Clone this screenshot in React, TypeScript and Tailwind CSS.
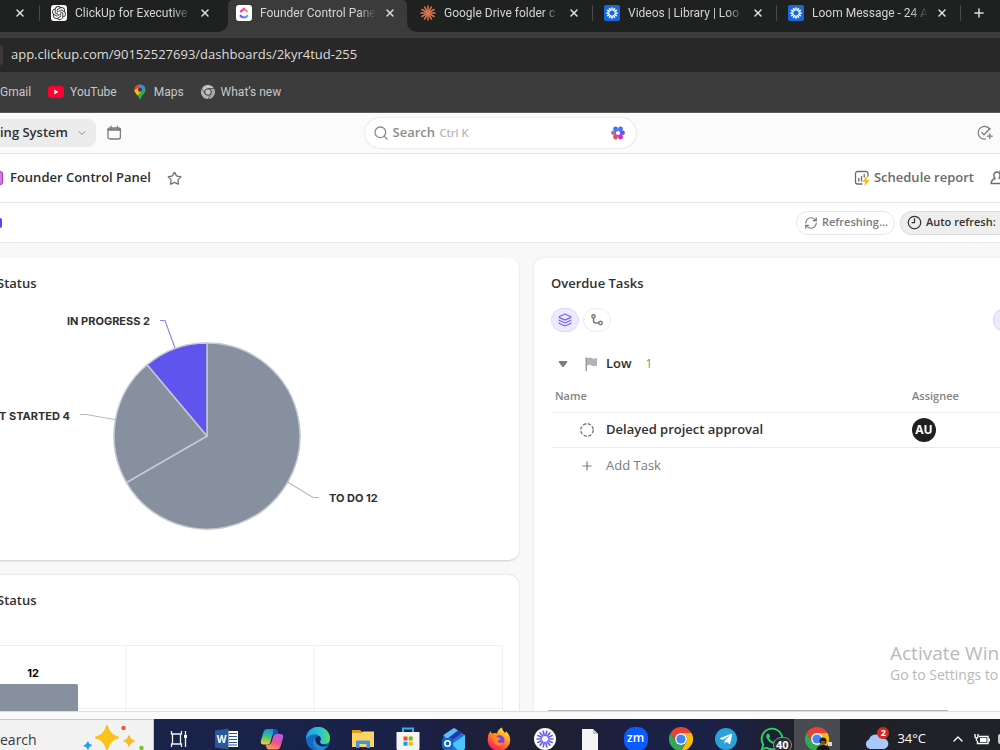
import React from 'react'
import {
  ChevronDown,
  ChevronUp,
  Clock9,
  Layers,
  Plus,
  RefreshCw,
  Search,
  Star,
  X,
} from 'lucide-react'
import { FaWhatsapp, FaTelegramPlane } from 'react-icons/fa'
import { SiOpenai } from 'react-icons/si'

interface IconProps {
  className?: string
}

interface BurstProps extends IconProps {
  rays: number
  inner: number
  outer: number
  width: number
}

function Burst({ rays, inner, outer, width, className }: BurstProps) {
  const angles = Array.from({ length: rays }, (_, i) => (i * 2 * Math.PI) / rays)
  return (
    <svg viewBox="-12 -12 24 24" className={className} fill="none" stroke="currentColor" strokeWidth={width} strokeLinecap="round">
      {angles.map((a) => (
        <path
          key={a}
          d={`M${Math.cos(a) * inner} ${Math.sin(a) * inner}L${Math.cos(a) * outer} ${Math.sin(a) * outer}`}
        />
      ))}
    </svg>
  )
}

function OpenAiFavicon() {
  return (
    <span className="flex h-4 w-4 shrink-0 items-center justify-center rounded-[3px] bg-white">
      <SiOpenai className="h-3.5 w-3.5 text-[#333333]" />
    </span>
  )
}

function ClickUpFavicon() {
  return (
    <svg viewBox="0 0 16 16" className="h-4 w-4 shrink-0">
      <defs>
        <linearGradient id="cuTop" x1="0" x2="1">
          <stop offset="0" stopColor="#ff02f0" />
          <stop offset="1" stopColor="#ffb11a" />
        </linearGradient>
        <linearGradient id="cuBottom" x1="0" x2="1">
          <stop offset="0" stopColor="#8930fd" />
          <stop offset="1" stopColor="#27c8f9" />
        </linearGradient>
      </defs>
      <rect width="16" height="16" rx="3" fill="#fff" />
      <path d="M4.4 7L8 3.7L11.6 7" fill="none" stroke="url(#cuTop)" strokeWidth="2" />
      <path d="M4 10.2Q8 14.8 12 10.2" fill="none" stroke="url(#cuBottom)" strokeWidth="2.1" />
    </svg>
  )
}

function ClaudeFavicon() {
  return <Burst rays={12} inner={1} outer={10.5} width={2.2} className="h-4 w-4 shrink-0 text-[#e0734f]" />
}

function LoomFavicon() {
  return (
    <span className="flex h-4 w-4 shrink-0 items-center justify-center rounded-[2px] bg-[#1868db]">
      <Burst rays={12} inner={5.5} outer={8.5} width={3} className="h-3.5 w-3.5 text-[#e4efff]" />
    </span>
  )
}

function YouTubeIcon() {
  return (
    <svg viewBox="0 0 16 12" className="h-3 w-4">
      <rect width="16" height="12" rx="3" fill="#ff0033" />
      <path d="M6.3 3.6L10.5 6L6.3 8.4Z" fill="#fff" />
    </svg>
  )
}

function MapsIcon() {
  return (
    <svg viewBox="0 0 12 16" className="h-4 w-3">
      <defs>
        <clipPath id="pin">
          <path d="M6 0.5A5.5 5.5 0 0 1 11.5 6C11.5 9.6 7.5 10.8 6.7 14.8Q6 16 5.3 14.8C4.5 10.8 0.5 9.6 0.5 6A5.5 5.5 0 0 1 6 0.5Z" />
        </clipPath>
      </defs>
      <g clipPath="url(#pin)">
        <rect width="12" height="16" fill="#34a853" />
        <path d="M0 0H6V6L0 9Z" fill="#ea4335" />
        <path d="M5 0H12V3L7 8Z" fill="#4285f4" />
        <path d="M0 6.5L4 4L7 8L2 13L0 11Z" fill="#fbbc04" />
      </g>
      <circle cx="6" cy="5.8" r="2" fill="#3c3c3c" />
    </svg>
  )
}

interface ChromeIconProps extends IconProps {
  mono?: boolean
}

function ChromeIcon({ mono, className }: ChromeIconProps) {
  const [red, yellow, green, blue, ring] = mono
    ? ['#c3c3c3', '#a9a9a9', '#b6b6b6', '#c3c3c3', '#3c3c3c']
    : ['#e94235', '#fbbc05', '#31a853', '#4285f4', '#ffffff']
  return (
    <svg viewBox="0 0 24 24" className={className}>
      <path d="M1.6 6A12 12 0 0 1 22.4 6H12A6 6 0 0 0 6.8 15Z" fill={red} />
      <path d="M22.4 6A12 12 0 0 1 12 24L17.2 15A6 6 0 0 0 12 6Z" fill={yellow} />
      <path d="M12 24A12 12 0 0 1 1.6 6L6.8 15A6 6 0 0 0 17.2 15Z" fill={green} />
      {mono && <path d="M12 6H22.4M6.8 15L1.6 6M17.2 15L12 24" stroke={ring} strokeWidth="1" />}
      <circle cx="12" cy="12" r="6" fill={ring} />
      <circle cx="12" cy="12" r="4.6" fill={blue} />
    </svg>
  )
}

function CalendarIcon() {
  return (
    <svg viewBox="0 0 16 16" className="h-4 w-4" fill="none" stroke="#7c7c7c" strokeLinecap="round">
      <rect x="2" y="3" width="12.4" height="11" rx="2" strokeWidth="1.3" />
      <path d="M2.5 4.6H14" strokeWidth="2.4" />
      <path d="M5 1.2V3M11.4 1.2V3" strokeWidth="1.3" />
    </svg>
  )
}

function BrainIcon() {
  return (
    <svg viewBox="-8 -8 16 16" className="h-4 w-4">
      <defs>
        <linearGradient id="brainTop" x1="0" x2="1">
          <stop offset="0" stopColor="#1e9bff" />
          <stop offset="1" stopColor="#3d5cff" />
        </linearGradient>
      </defs>
      <circle cx="-4.6" cy="-0.2" r="2.3" fill="#a86cc0" />
      <circle cx="4.6" cy="-0.2" r="2.3" fill="#7a42ff" />
      <circle cx="-2.5" cy="-4" r="2.4" fill="url(#brainTop)" />
      <circle cx="2.5" cy="-4" r="2.4" fill="#3578ff" />
      <circle cx="2.5" cy="4" r="2.4" fill="#f311d8" />
      <circle cx="-2.5" cy="4" r="2.4" fill="#f4502c" />
      <circle r="2.8" fill="none" stroke="#7a62e8" strokeWidth="1.4" />
    </svg>
  )
}

function TaskAddIcon() {
  return (
    <svg viewBox="0 0 16 16" className="h-4 w-4" fill="none" stroke="#7c7c7c" strokeWidth="1.3" strokeLinecap="round">
      <path d="M12.8 4.2A6.3 6.3 0 1 0 8.2 14" />
      <path d="M4.8 7.5L7 9.7L13 3.5" />
      <path d="M12.8 8.8V13.6M10.4 11.2H15.2" />
    </svg>
  )
}

function ReportIcon() {
  return (
    <svg viewBox="0 0 16 16" className="h-4 w-4" fill="none" strokeLinecap="round">
      <path d="M14 6V3.5A2 2 0 0 0 12 1.5H3.5A2 2 0 0 0 1.5 3.5V12A2 2 0 0 0 3.5 14H8" stroke="#6c6c6c" strokeWidth="1.3" />
      <path d="M4.8 8.5V11M7.5 6.5V11M10.2 4.5V7" stroke="#6c6c6c" strokeWidth="1.3" />
      <path d="M12.8 6.5L9 11.5H11.8L11 15.5L15 10.5H12.2Z" fill="#ffb400" stroke="#ffb400" strokeWidth="0.6" />
    </svg>
  )
}

function PersonIcon() {
  return (
    <svg viewBox="0 0 16 16" className="h-4 w-4" fill="none" stroke="#6c6c6c" strokeWidth="1.4" strokeLinecap="round">
      <path d="M5 8.5Q3.6 6.8 3.9 4.5Q4.5 2 7 2Q9.5 2 10 4.5Q10.3 6.8 9 8.5" />
      <path d="M5 8.5Q1.2 9.8 1.2 13.5H12" />
      <path d="M10 1.5A3 3 0 0 1 13 6" />
    </svg>
  )
}

function SubtaskIcon() {
  return (
    <svg viewBox="0 0 12 12" className="h-3 w-3" fill="none" stroke="#7a7a7a" strokeWidth="1.5">
      <circle cx="2.5" cy="2.3" r="1.6" />
      <circle cx="9.5" cy="9" r="1.7" />
      <path d="M2.5 4V6.5A2.5 2.5 0 0 0 5 9H7.7" />
    </svg>
  )
}

interface Tab {
  title: string
  icon: React.ReactNode
  divider?: boolean
}

const rightTabs: Tab[] = [
  { title: 'Google Drive folder c', icon: <ClaudeFavicon />, divider: true },
  { title: 'Videos | Library | Loo', icon: <LoomFavicon />, divider: true },
  { title: 'Loom Message - 24 A', icon: <LoomFavicon />, divider: true },
]

function TabContent({ title, icon, divider }: Tab) {
  return (
    <>
      {icon}
      <a
        href="#"
        className="w-[116px] overflow-hidden whitespace-nowrap text-[#d4d4d4] [mask-image:linear-gradient(to_right,#000_85%,transparent)]"
      >
        {title}
      </a>
      <button aria-label="Close tab" className="text-[#dedede]">
        <X className="h-3 w-3" strokeWidth={3} />
      </button>
      {divider && <span className="ml-auto h-4 w-px bg-[#4a4b4a]" />}
    </>
  )
}

function TabStrip() {
  return (
    <div className="flex h-8 overflow-hidden bg-[#3b3b3b] text-xs">
      <div className="flex w-[228px] shrink-0 rounded-br-[10px] bg-[#1f2120]">
        <div className="flex h-[25px] w-[43px] items-center pl-[14px]">
          <button aria-label="Close tab" className="text-[#dedede]">
            <X className="h-3 w-3" strokeWidth={3} />
          </button>
          <span className="ml-auto mr-[3px] h-4 w-px bg-[#4a4b4a]" />
        </div>
        <div className="flex h-[25px] flex-1 items-center gap-2 pl-2">
          <TabContent title="ClickUp for Executive" icon={<OpenAiFavicon />} />
        </div>
      </div>
      <div className="w-[179px] shrink-0 bg-[#1f2120]">
        <div className="h-full rounded-t-[5px] bg-[#3b3b3b]">
          <div className="flex h-[25px] items-center gap-2 pl-2">
            <TabContent title="Founder Control Pane" icon={<ClickUpFavicon />} />
          </div>
        </div>
      </div>
      <div className="flex min-w-0 flex-1 rounded-bl-[10px] bg-[#1f2120] pl-[5px]">
        {rightTabs.map((tab) => (
          <div key={tab.title} className="flex h-[25px] w-[184px] shrink-0 items-center gap-2 pl-2 pr-[3px]">
            <TabContent {...tab} />
          </div>
        ))}
        <button aria-label="New tab" className="ml-2 h-[25px] text-[#dedede]">
          <Plus className="h-3.5 w-3.5" strokeWidth={2.5} />
        </button>
      </div>
    </div>
  )
}

function BrowserChrome() {
  return (
    <header className="font-[Roboto,sans-serif]">
      <TabStrip />
      <div className="bg-[#3b3b3b] pt-1.5">
        <div className="flex h-[34px] items-center overflow-hidden bg-[#282828]">
          <span className="h-5 w-[3px] rounded-r-full bg-[#3c3c3c]" />
          <input
            aria-label="Address"
            defaultValue="app.clickup.com/90152527693/dashboards/2kyr4tud-255"
            className="ml-2 w-full bg-transparent font-['Open_Sans',sans-serif] text-[13px] text-[#dcdcdc] outline-none"
          />
        </div>
      </div>
      <nav className="flex h-[41px] items-center gap-[17px] border-b border-[#5a5a5a] bg-[#3c3c3c] text-xs text-[#c8c8c8]">
        <a href="#">Gmail</a>
        <a href="#" className="flex items-center gap-1.5">
          <YouTubeIcon />
          YouTube
        </a>
        <a href="#" className="flex items-center gap-2">
          <MapsIcon />
          Maps
        </a>
        <a href="#" className="flex items-center gap-1.5">
          <ChromeIcon mono className="h-3.5 w-3.5" />
          What’s new
        </a>
      </nav>
    </header>
  )
}

function AppBar() {
  return (
    <div className="grid h-[41px] grid-cols-[1fr_271px_1fr] items-center border-b border-[#e6e6e6] bg-[#fbfbfb]">
      <div className="flex items-center">
        <button className="flex h-7 w-24 items-center justify-between whitespace-nowrap rounded-r-lg bg-[#ececec] pr-2 text-[13px] font-semibold text-[#303030]">
          ing System
          <ChevronDown className="h-3 w-3 text-[#8a8a8a]" />
        </button>
        <button aria-label="Calendar" className="ml-2.5">
          <CalendarIcon />
        </button>
      </div>
      <label className="flex h-[30px] items-center rounded-full bg-white pl-2 pr-2.5 shadow-[0_0_2px_rgba(0,0,0,0.2)]">
        <Search className="h-4 w-4 text-[#8c8c8c]" strokeWidth={2} />
        <input
          aria-label="Search"
          placeholder="Search"
          className="ml-1 w-[47px] bg-transparent text-[13px] font-semibold outline-none placeholder:text-[#8c8c8c]"
        />
        <kbd className="font-[Open_Sans,sans-serif] text-[11px] font-semibold text-[#b8b8b8]">Ctrl K</kbd>
        <span className="ml-auto">
          <BrainIcon />
        </span>
      </label>
      <button aria-label="New task" className="mr-[7px] justify-self-end">
        <TaskAddIcon />
      </button>
    </div>
  )
}

function TitleBar() {
  return (
    <div className="flex h-[49px] items-center overflow-hidden border-b border-[#e8e8e8] bg-white">
      <span className="h-3.5 w-[3px] rounded-r-[3px] border border-l-0 border-[#a83bc0] bg-[#cf7fdd]" />
      <h1 className="ml-[7px] text-[13px] font-semibold text-[#2e2e2e]">Founder Control Panel</h1>
      <button aria-label="Favorite" className="ml-4 text-[#707070]">
        <Star className="h-[15px] w-[15px]" strokeWidth={2} />
      </button>
      <button className="ml-auto flex items-center gap-1 text-[13px] font-semibold text-[#6a6a6a]">
        <ReportIcon />
        Schedule report
      </button>
      <button aria-label="Share" className="-mr-1.5 ml-4 shrink-0">
        <PersonIcon />
      </button>
    </div>
  )
}

function RefreshBar() {
  return (
    <div className="flex h-10 items-center overflow-hidden border-b border-[#e8e8e8] bg-white text-[11px] font-semibold">
      <span className="h-2.5 w-[2px] rounded-r-full bg-[#5b43f0]" />
      <button className="ml-auto flex h-6 w-[99px] items-center gap-1 whitespace-nowrap rounded-full border border-[#e8e8e8] pl-[7px] text-[#7a7a7a]">
        <RefreshCw className="h-3.5 w-3.5 shrink-0" />
        Refreshing...
      </button>
      <button className="ml-[5px] flex h-6 w-[100px] items-center gap-1 whitespace-nowrap rounded-l-full border border-r-0 border-[#dcdcdc] bg-[#eeeeee] pl-1.5 text-[#333333]">
        <Clock9 className="h-[15px] w-[15px] shrink-0" />
        Auto refresh:
      </button>
    </div>
  )
}

const pieLabel = 'fill-[#303030] font-[Inter,sans-serif] text-[11px] font-bold'

function StatusPie() {
  return (
    <svg viewBox="0 300 400 240" className="mt-2 h-[240px] w-[400px]">
      <g stroke="#c3c9d0" strokeWidth="1.5" strokeLinejoin="round">
        <path d="M207 436V343A93 93 0 1 1 126.5 482.5Z" fill="#87909e" />
        <path d="M207 436L126.5 482.5A93 93 0 0 1 147.2 364.8Z" fill="#87909e" />
        <path d="M207 436L147.2 364.8A93 93 0 0 1 207 343Z" fill="#5f55ee" />
      </g>
      <g fill="none">
        <path d="M160 320.5H165L175 348" stroke="#8f88f3" strokeWidth="1.2" />
        <path d="M80 414.5H86L115 419.5" stroke="#b4b9c1" strokeWidth="1.2" />
        <path d="M287.5 482L313 497.5H319" stroke="#b4b9c1" strokeWidth="1.2" />
      </g>
      <text x="150" y="325" textAnchor="end" className={pieLabel}>IN PROGRESS 2</text>
      <text x="70" y="420" textAnchor="end" className={pieLabel}>T STARTED 4</text>
      <text x="329" y="502" className={pieLabel}>TO DO 12</text>
    </svg>
  )
}

function StatusBars() {
  return (
    <svg viewBox="0 620 519 100" className="mt-[11px] h-[100px] w-[519px]">
      <path d="M0 645.5H502.5V720M126 645.5V720M314 645.5V720M0 708.5H502" fill="none" stroke="#f0f0f0" />
      <path d="M0 684H76Q78 684 78 686V720H0Z" fill="#87909e" />
      <text x="33" y="677" textAnchor="middle" className="fill-black font-[Inter,sans-serif] text-[11px] font-bold">12</text>
    </svg>
  )
}

function OverdueTasks() {
  return (
    <section className="flex min-w-0 flex-col overflow-hidden rounded-tl-[10px] bg-white pl-[17px] shadow-[0_0_3px_rgba(0,0,0,0.1)]">
      <h2 className="mt-4 h-[18px] text-[13px] font-semibold leading-[18px] text-[#303030]">Overdue Tasks</h2>
      <div className="mt-4 flex shrink-0 gap-1">
        <button aria-label="Group by" className="flex h-6 w-7 items-center justify-center rounded-full border border-[#dcd9fb] bg-[#ecebfe] text-[#6f63ef]">
          <Layers className="h-3.5 w-3.5" />
        </button>
        <button aria-label="Subtasks" className="flex h-6 w-7 items-center justify-center rounded-full border border-[#ebebeb]">
          <SubtaskIcon />
        </button>
        <button aria-label="Filter" className="-mr-[21px] ml-auto h-6 w-7 shrink-0 rounded-full border border-[#d2cefa] bg-[#ecebfe]" />
      </div>
      <div className="mt-5 flex h-6 shrink-0 items-center pl-[7px] text-[13px]">
        <button aria-label="Collapse group">
          <svg viewBox="0 0 10 8" className="h-2 w-2.5" fill="#7d7d7d">
            <path d="M1.5 1H8.5Q10 1.2 9 2.6L6 6.5Q5 7.5 4 6.5L1 2.6Q0 1.2 1.5 1Z" />
          </svg>
        </button>
        <svg viewBox="0 0 12 14" className="ml-[17px] h-3.5 w-3">
          <path d="M0.5 0.5H2V14H0.5Z" fill="#9b9b9b" />
          <path d="M2 1Q4.5 -0.2 6.5 1T12 1V8.5Q9 9.8 6.5 8.5T2 8.5Z" fill="#b3b3b3" />
        </svg>
        <span className="ml-[9px] font-semibold text-[#303030]">Low</span>
        <span className="ml-3.5 text-xs text-[#8a8a8a]">1</span>
      </div>
      <table className="w-full table-fixed border-collapse text-left text-[13px]">
        <thead>
          <tr className="h-9 border-b border-[#ececec] text-[11px] text-[#838383]">
            <th className="w-[361px] pl-1 pt-1 font-semibold">Name</th>
            <th className="pt-1 font-semibold">Assignee</th>
          </tr>
        </thead>
        <tbody>
          <tr className="h-[35px] border-b border-[#ececec]">
            <td>
              <div className="flex items-center pl-7">
                <svg viewBox="0 0 16 16" className="h-4 w-4" fill="none" stroke="#7d7d7d" strokeWidth="1.5">
                  <circle cx="8" cy="8" r="6.2" strokeDasharray="3.3 1.57" />
                </svg>
                <a href="#" className="ml-[11px] font-semibold text-[#303030]">Delayed project approval</a>
              </div>
            </td>
            <td>
              <span className="flex h-6 w-6 items-center justify-center rounded-full bg-[#1f1f1f] text-xs font-bold text-white">
                AU
              </span>
            </td>
          </tr>
        </tbody>
      </table>
      <button className="flex h-9 shrink-0 items-center pl-[29px] text-[13px] text-[#7c7c7c]">
        <Plus className="h-3.5 w-3.5" strokeWidth={2} />
        <span className="ml-3">Add Task</span>
      </button>
      <div className="-ml-[3px] mt-auto h-px w-[400px] shrink-0 bg-[#b0b0b0]" />
    </section>
  )
}

function Dashboard() {
  return (
    <main className="grid min-h-0 flex-1 grid-cols-[520fr_466fr] gap-[14px] overflow-hidden border-b border-[#dedede] bg-[#f8f8f8] pt-[15px]">
      <div className="flex min-h-0 min-w-0 flex-col gap-[15px] overflow-hidden pr-px">
        <section className="h-[302px] shrink-0 overflow-hidden rounded-r-[10px] bg-white pt-4 shadow-[0_1px_2px_rgba(0,0,0,0.18)]">
          <h2 className="-ml-[3px] h-[18px] text-[13px] font-semibold leading-[18px] text-[#303030]">Status</h2>
          <StatusPie />
        </section>
        <section className="min-h-0 flex-1 overflow-hidden rounded-tr-[10px] bg-white pt-4 shadow-[0_0_2px_rgba(0,0,0,0.2)]">
          <h2 className="-ml-[3px] h-[18px] text-[13px] font-semibold leading-[18px] text-[#303030]">Status</h2>
          <StatusBars />
        </section>
      </div>
      <OverdueTasks />
    </main>
  )
}

function SearchSparkles() {
  return (
    <svg viewBox="0 0 62 32" className="h-8 w-[62px]">
      <path d="M24 2Q26 11 35 13.5Q26 16 24 25Q22 16 13 13.5Q22 11 24 2Z" fill="#fbc21c" stroke="#fbc21c" strokeWidth="2" strokeLinejoin="round" />
      <path d="M46 12Q47 16 51 17Q47 18 46 22Q45 18 41 17Q45 16 46 12Z" fill="#f9ba2d" stroke="#f9ba2d" strokeWidth="1.5" strokeLinejoin="round" />
      <path d="M5 17L6.5 20L9.5 21L6.5 23L5 26L3 23L0 22L3 20Z" fill="#1ca3ec" />
      <circle cx="40.5" cy="4" r="2.2" fill="#f2562c" />
      <circle cx="58.5" cy="24" r="2.2" fill="#7cbf2b" />
    </svg>
  )
}

function TaskViewIcon() {
  return (
    <svg viewBox="0 0 18 16" className="h-4 w-[18px]" fill="none" stroke="#f2f2f2" strokeWidth="1.3">
      <path d="M1.5 0V3H11.5V0M1.5 16V13H11.5V16M2.5 3V13M10.5 3V13M15.5 0V16" />
      <path d="M14 4H17V7H14Z" fill="#fff" stroke="none" />
    </svg>
  )
}

function WordIcon() {
  return (
    <svg viewBox="0 0 24 22" className="h-[22px] w-6">
      <path d="M11 3H23V19H11Z" fill="#fff" />
      <path d="M14 5.5H22M14 8.5H22M14 11.5H22M14 14.5H22M14 17H22" stroke="#2b579a" strokeWidth="1.2" />
      <path d="M0 2.5L13.5 0.5V21.5L0 19.5Z" fill="#2b579a" />
      <text x="6.7" y="14.5" textAnchor="middle" className="fill-white text-[10px] font-bold">W</text>
    </svg>
  )
}

function CopilotIcon() {
  return (
    <svg viewBox="0 0 24 24" className="h-6 w-6">
      <defs>
        <linearGradient id="cpLeft" x1="0.5" x2="0.3" y2="1">
          <stop offset="0" stopColor="#1b8fe8" />
          <stop offset="0.5" stopColor="#3cc27d" />
          <stop offset="1" stopColor="#f7d02c" />
        </linearGradient>
        <linearGradient id="cpRight" x1="0.7" x2="0.3" y2="1">
          <stop offset="0" stopColor="#b05cf0" />
          <stop offset="0.5" stopColor="#ee4f93" />
          <stop offset="1" stopColor="#fb9a4c" />
        </linearGradient>
      </defs>
      <path d="M7 2H15Q17 2 17.7 4.5L18.5 7H15Q12.5 7 11.8 10L10.5 15Q9.8 17.5 7.5 17.5H3.5Q0 17.5 1 13.5L3.5 5Q4.5 2 7 2Z" fill="url(#cpLeft)" />
      <path d="M13.5 2H15.5Q17 2 17.7 4.5L18.5 7H15Q13 7 12.4 8.5Z" fill="#164fbd" />
      <path d="M17 22.5H9Q7 22.5 6.3 20L5.5 17.5H8.5Q11 17.5 11.8 14.5L13.3 9Q14 7 16 7H20.5Q24 7 23 11L20.5 19.5Q19.5 22.5 17 22.5Z" fill="url(#cpRight)" />
    </svg>
  )
}

function EdgeIcon() {
  return (
    <svg viewBox="0 0 24 24" className="h-6 w-6">
      <defs>
        <linearGradient id="edgeTop" x1="0" x2="1">
          <stop offset="0" stopColor="#1b9de2" />
          <stop offset="0.6" stopColor="#2cc3d2" />
          <stop offset="1" stopColor="#5cdc5c" />
        </linearGradient>
      </defs>
      <circle cx="12" cy="12" r="12" fill="#1668c0" />
      <path d="M0 12A12 12 0 0 1 24 11.5Q24 17 18 17Q14 17 14 14.7Q16 12.5 14 9.5Q11.5 6.5 7 7.5Q2 8.5 0 12Z" fill="url(#edgeTop)" />
      <path d="M14 9.5Q10 8.5 9 13Q8.5 19 15 20.5Q19 21 22.5 18Q20 17.8 18 17.5Q13.5 17 14 14.7Q15.5 12.5 14 9.5Z" fill="#1a2350" />
      <path d="M9 11Q5 15 8 19.5Q11 23.5 15 23.6Q20 22.5 22.5 18Q18.5 20.5 14.5 19Q9 17 9 11Z" fill="#1d8ad8" />
    </svg>
  )
}

function FolderIcon() {
  return (
    <svg viewBox="0 0 22 20" className="h-5 w-[22px]">
      <path d="M0 1H8L10 3V6H0Z" fill="#e09a17" />
      <path d="M0 4L9 4L11 2.5H22V18H0Z" fill="#fcd364" />
      <path d="M4 19V12.5Q4 11.5 5 11.5H17Q18 11.5 18 12.5V19H14.5V15H7.5V19Z" fill="#3f97de" />
    </svg>
  )
}

function StoreIcon() {
  return (
    <svg viewBox="0 0 24 24" className="h-6 w-6">
      <path d="M7 6V1.5H17V6" fill="none" stroke="#2fb0e8" strokeWidth="2" />
      <path d="M0.5 5H23.5V21Q23.5 23.5 21 23.5H3Q0.5 23.5 0.5 21Z" fill="#f4f4f4" />
      <path d="M7.5 9.5H11.5V13.5H7.5Z" fill="#f25022" />
      <path d="M12.7 9.5H16.7V13.5H12.7Z" fill="#7fba00" />
      <path d="M7.5 14.7H11.5V18.7H7.5Z" fill="#00a4ef" />
      <path d="M12.7 14.7H16.7V18.7H12.7Z" fill="#ffb900" />
    </svg>
  )
}

function OutlookIcon() {
  return (
    <svg viewBox="0 0 24 24" className="h-6 w-6">
      <path d="M1.5 8L12 1L23 8V20Q23 23.5 20 23.5H5Q1.5 23.5 1.5 20Z" fill="#2272dd" />
      <path d="M1.5 8L12 1L16 3.5L5 12Z" fill="#63bdf5" />
      <path d="M5 12L16 3.5L20 6L8 15Z" fill="#2638a8" />
      <path d="M23 8L10 17L16 23.5H20Q23 23.5 23 20Z" fill="#4dc4fb" />
      <rect x="0" y="11" width="11" height="11" rx="2.5" fill="#1563c8" />
      <circle cx="5.5" cy="16.5" r="2.7" fill="none" stroke="#fff" strokeWidth="1.6" />
    </svg>
  )
}

function FirefoxIcon() {
  return (
    <svg viewBox="0 0 24 24" className="h-6 w-6">
      <defs>
        <linearGradient id="foxBody" x1="0.8" x2="0.2" y2="1">
          <stop offset="0" stopColor="#fff04a" />
          <stop offset="0.4" stopColor="#ff9a1e" />
          <stop offset="0.8" stopColor="#ff3647" />
          <stop offset="1" stopColor="#e31587" />
        </linearGradient>
      </defs>
      <path d="M3.5 4Q4 6 5.5 6.5Q8 5.5 10 6.5Q11 2 15 0.5Q15 3.5 18 6Q19 5.5 18.8 4Q23.3 8 23.3 13A11.3 10.8 0 0 1 0.7 13Q0.5 7.5 3.5 4Z" fill="url(#foxBody)" />
      <circle cx="12.5" cy="13.2" r="5" fill="#7a3ff0" />
      <path d="M5.5 9Q9 8 11.5 10.5Q14 10.8 13.5 12.5Q11 12.8 10.5 14.5Q12.5 17 16.5 15Q15 18.8 11.5 18.5Q6 17.5 5.5 9Z" fill="#ff8a1c" />
    </svg>
  )
}

function LoomAppIcon() {
  return (
    <span className="flex h-[22px] w-[22px] items-center justify-center rounded-full bg-white">
      <Burst rays={14} inner={4.5} outer={9.5} width={2} className="h-5 w-5 text-[#625df5]" />
    </span>
  )
}

function FileIcon() {
  return (
    <svg viewBox="0 0 16 21" className="h-[21px] w-4">
      <path d="M0 0H11L16 5V21H0Z" fill="#f5f5f5" />
      <path d="M11 0V5H16Z" fill="#c4c4c4" />
    </svg>
  )
}

function ZoomIcon() {
  return (
    <span className="flex h-6 w-6 items-center justify-center rounded-[10px] bg-[#0b5cff] pb-0.5 text-xs font-semibold text-white">
      zm
    </span>
  )
}

function TelegramIcon() {
  return (
    <span className="flex h-[22px] w-[22px] items-center justify-center rounded-full bg-[#2ba2dc]">
      <FaTelegramPlane className="h-3.5 w-3.5 text-white" />
    </span>
  )
}

function WhatsAppIcon() {
  return (
    <span className="relative">
      <FaWhatsapp className="h-[26px] w-[26px] text-[#25d366]" />
      <span className="absolute left-3.5 top-[11px] flex h-4 w-[19px] items-center justify-center rounded-full border border-[#8a8a8a] bg-[#2a2c30] text-[11px] font-bold text-white">
        40
      </span>
    </span>
  )
}

function ChromeProfileIcon() {
  return (
    <span className="relative">
      <ChromeIcon className="h-6 w-6" />
      <svg viewBox="0 0 16 16" className="absolute left-[11px] top-2.5 h-4 w-4">
        <path d="M12 5H16V9H12Z" fill="#d8d8d8" />
        <circle cx="7" cy="4" r="3.5" fill="#2a1d18" />
        <path d="M5 4H9V7.5H5Z" fill="#7a5240" />
        <path d="M0 16Q0 8 7 8T14 16Z" fill="#151515" />
      </svg>
    </span>
  )
}

interface TaskbarItem {
  name: string
  icon: React.ReactNode
  active?: boolean
}

const taskbarItems: TaskbarItem[] = [
  { name: 'Word', icon: <WordIcon /> },
  { name: 'Copilot', icon: <CopilotIcon /> },
  { name: 'Edge', icon: <EdgeIcon /> },
  { name: 'File Explorer', icon: <FolderIcon /> },
  { name: 'Microsoft Store', icon: <StoreIcon /> },
  { name: 'Outlook', icon: <OutlookIcon /> },
  { name: 'Firefox', icon: <FirefoxIcon /> },
  { name: 'Loom', icon: <LoomAppIcon /> },
  { name: 'File', icon: <FileIcon /> },
  { name: 'Zoom', icon: <ZoomIcon /> },
  { name: 'Chrome', icon: <ChromeIcon className="h-6 w-6" /> },
  { name: 'Telegram', icon: <TelegramIcon /> },
  { name: 'WhatsApp', icon: <WhatsAppIcon /> },
  { name: 'Chrome profile', icon: <ChromeProfileIcon />, active: true },
]

function Taskbar() {
  return (
    <footer className="h-[31px] shrink-0 overflow-hidden bg-[linear-gradient(to_right,#19244a_15%,#1a2148_40%,#1f1f30_55%,#1b2045_65%,#1b2147_72%,#1f2028_80%,#1f2226)]">
      <div className="flex h-10 items-center">
        <label className="flex h-full w-[154px] shrink-0 items-center overflow-hidden border-r border-t border-[#c9c9c9] bg-[#f2f2f2]">
          <input
            aria-label="Type here to search"
            placeholder="earch"
            className="w-[83px] bg-transparent text-sm outline-none placeholder:text-[#3a3a3a]"
          />
          <SearchSparkles />
        </label>
        <button aria-label="Task view" className="flex w-[50px] shrink-0 justify-center">
          <TaskViewIcon />
        </button>
        <div className="flex h-full w-[636px] shrink-0">
          {taskbarItems.map((item) => (
            <button
              key={item.name}
              aria-label={item.name}
              className={`flex h-full flex-1 items-center justify-center ${item.active ? 'bg-[#4a4b50]' : ''}`}
            >
              {item.icon}
            </button>
          ))}
        </div>
        <button className="ml-auto flex shrink-0 items-center gap-2 text-[13px] text-white">
          <span className="relative">
            <svg viewBox="0 0 24 22" className="h-[22px] w-6">
              <path d="M5 21A5 5 0 0 1 4 11.5A7 7 0 0 1 17 10.5A5.3 5.3 0 0 1 19 21Z" fill="#a9c8fa" />
            </svg>
            <span className="absolute -top-px left-3 flex h-3 w-3 items-center justify-center rounded-full bg-[#d42a1e] text-[9px] font-bold">
              2
            </span>
          </span>
          34°C
        </button>
        <button aria-label="Show hidden icons" className="ml-6 shrink-0 text-white">
          <ChevronUp className="h-4 w-4" />
        </button>
        <svg viewBox="0 0 16 12" className="ml-2 mr-2 h-3 w-4 shrink-0" fill="none" stroke="#fff" strokeWidth="1.4">
          <path d="M5 3.5H14V10.5H3.5V8M15.5 5.5V8.5M1 1V3.5Q1 5 2.5 5T4 3.5V1M2.5 5V8" />
          <path d="M6 5H12.5V9H6Z" fill="#fff" stroke="none" />
        </svg>
        <span className="h-2.5 w-[2px] shrink-0 rounded-l-full bg-[#c9c9c9]" />
      </div>
    </footer>
  )
}

export default function App() {
  return (
    <div className="flex h-screen flex-col overflow-hidden bg-[#fafafa] font-['Open_Sans','Noto_Sans',sans-serif]">
      <BrowserChrome />
      <div className="relative flex min-h-0 flex-1 flex-col pb-[7px]">
        <AppBar />
        <TitleBar />
        <RefreshBar />
        <Dashboard />
        {/* Windows activation watermark */}
        <div className="pointer-events-none absolute bottom-[34px] right-0 w-[110px] overflow-hidden whitespace-nowrap text-[#b9b9b9]">
          <p className="text-[19px] leading-6">Activate Win</p>
          <p className="text-sm leading-5">Go to Settings to</p>
        </div>
      </div>
      <Taskbar />
    </div>
  )
}
